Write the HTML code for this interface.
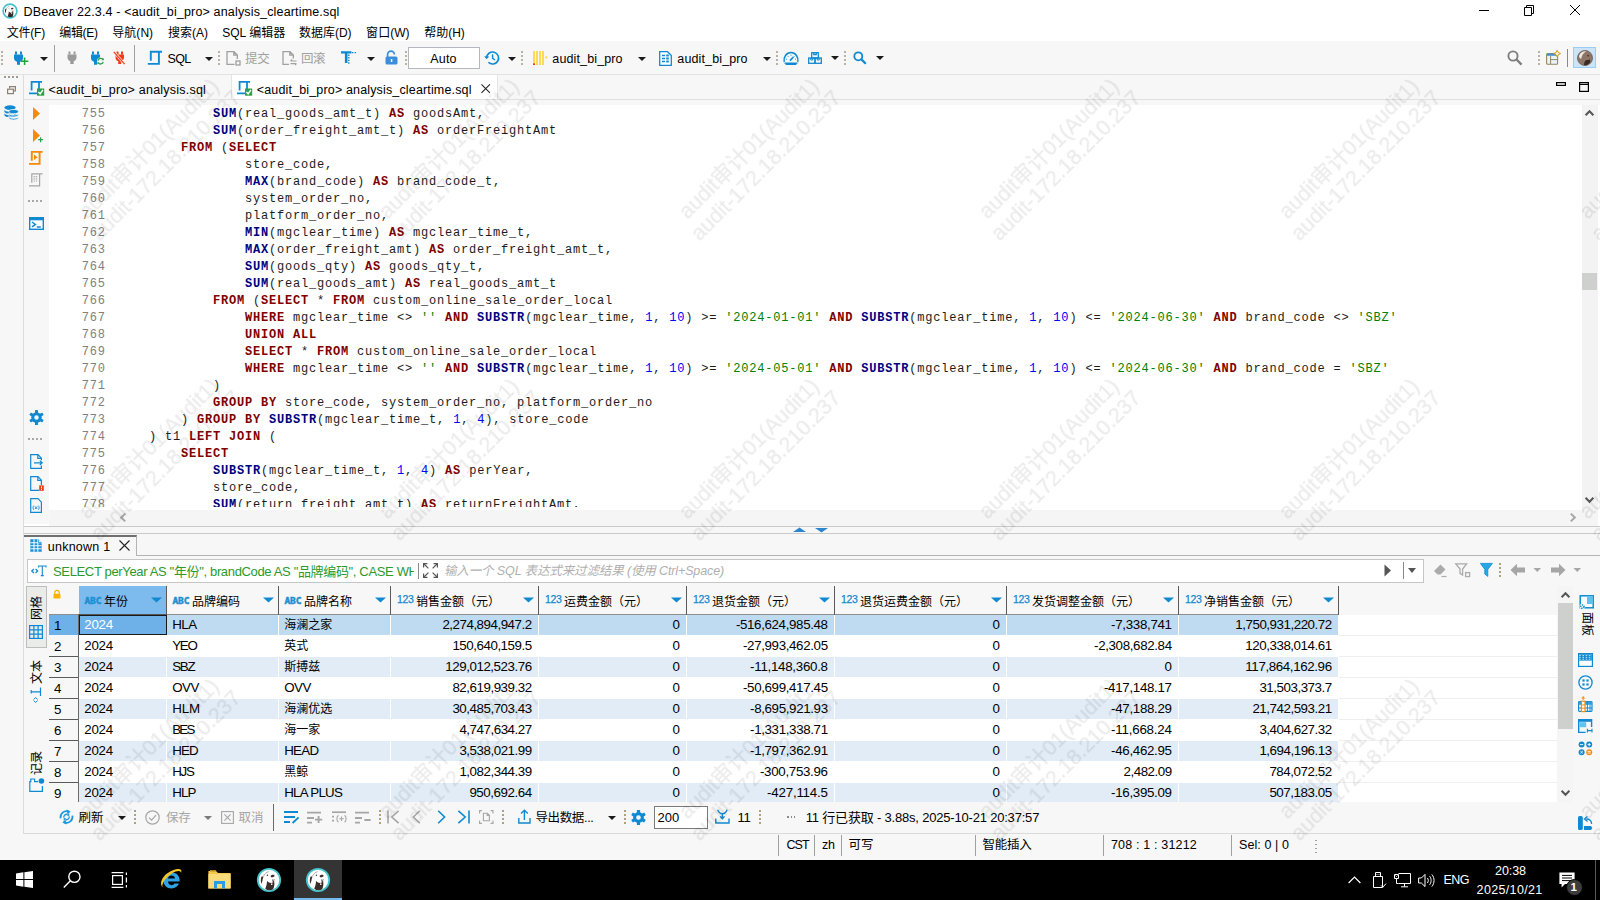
<!DOCTYPE html>
<html lang="zh">
<head>
<meta charset="utf-8">
<title>DBeaver 22.3.4</title>
<style>
html,body{margin:0;padding:0;}
body{width:1600px;height:900px;overflow:hidden;position:relative;background:#fff;font-family:"Liberation Sans","Noto Sans CJK SC",sans-serif;font-size:12.5px;color:#000;}
.abs{position:absolute;}
.t{position:absolute;white-space:pre;line-height:16px;height:16px;}
svg{position:absolute;overflow:visible;}
#titlebar{left:0;top:0;width:1600px;height:24px;background:#fff;}
#menubar{left:0;top:24px;width:1600px;height:17px;background:#fff;}
#toolbar{left:0;top:41px;width:1600px;height:33px;background:#f7f7f7;}
#tabbar{left:0;top:74px;width:1600px;height:31px;background:#f7f7f7;}
#leftstrip{left:0;top:100px;width:24px;height:760px;background:#f7f7f7;}
#editor{left:49px;top:105px;width:1533px;height:405px;background:#fff;}
#gutter{left:24px;top:100px;width:25px;height:424px;background:#f7f7f7;}
.ln{position:absolute;width:55.8px;text-align:right;color:#808080;font-family:"Liberation Mono",monospace;font-size:12px;letter-spacing:0.8px;line-height:17px;white-space:pre;}
.cl{position:absolute;font-family:"Liberation Mono",monospace;font-size:12px;letter-spacing:0.8px;line-height:17px;white-space:pre;color:#1c1c1c;}
.k{color:#800000;font-weight:bold;}
.f{color:#000080;font-weight:bold;}
.n{color:#0000ff;}
.s{color:#008000;}
.dots{position:absolute;width:2px;background:repeating-linear-gradient(to bottom,#b9b1a3 0,#b9b1a3 2px,transparent 2px,transparent 4px);}
.dd{position:absolute;width:0;height:0;margin-left:-0.4px;border-left:4px solid transparent;border-right:4px solid transparent;border-top:4.6px solid #1a1a1a;}
.vsep{position:absolute;width:1px;background:#a0a0a0;}
.hl{position:absolute;height:1px;background:#dedede;}
.vl{position:absolute;width:1px;background:#dedede;}
.wm{position:absolute;width:300px;height:47.6px;line-height:23.8px;font-size:21.33px;text-align:center;white-space:pre;color:#ebebeb;-webkit-text-stroke:0.18px #ebebeb;transform:rotate(-45deg);transform-origin:center;font-family:"Liberation Sans","Noto Sans CJK SC",sans-serif;}
#wm{mix-blend-mode:multiply;}
#taskbar{left:0;top:860px;width:1600px;height:40px;background:#000;}
</style>
</head>
<body>
<div class="abs" id="titlebar"></div>
<div class="abs" id="menubar"></div>
<div class="abs" id="toolbar"></div>
<div class="abs" id="tabbar"></div>
<div class="abs" id="leftstrip"></div>
<div class="abs" id="gutter"></div>
<div class="abs" id="editor"></div>
<!-- title bar -->
<svg style="left:2px;top:3px" width="16" height="16" viewBox="0 0 26 26"><circle cx="13" cy="13" r="11.2" fill="#fff" stroke="#45c2cb" stroke-width="2.6"/><path d="M5.5 9.5 C4.5 12 4.8 15 5.2 17 L6.4 14 C6.6 12 7 10.5 7.6 9.4 Z" fill="#3a2c28"/><path d="M7.6 9 C8.6 7 10.4 5.2 12.6 4.6" fill="none" stroke="#8a8280" stroke-width="0.7"/><ellipse cx="16.6" cy="9" rx="2" ry="1.25" transform="rotate(-15 16.6 9)" fill="#3a2c28"/><circle cx="11.4" cy="8.3" r="0.7" fill="#3a2c28"/><path d="M11 14 C13 16 15.5 16.5 17 15.2 L18.2 14 L18.4 17 C18.2 20 17.6 21.5 16.8 22.6 C14.5 23.6 11.5 23.4 9.2 22 C10.2 19.5 11 17 11 14 Z" fill="#3a2c28"/><path d="M16.4 12.4 l0.8 2.6 l1 -2.8" fill="none" stroke="#3a2c28" stroke-width="0.7"/><rect x="15" y="16.4" width="1.4" height="1.5" fill="#fff"/></svg>
<span class="t" style="letter-spacing:0.164px;left:23.5px;top:4.4px">DBeaver 22.3.4 - &lt;audit_bi_pro&gt; analysis_cleartime.sql</span>
<svg style="left:1479px;top:5px" width="102" height="11" viewBox="0 0 102 11" fill="none" stroke="#000" stroke-width="1"><path d="M0 5.5 H10"/><path d="M45.5 2.5 H52.5 V10.5 H45.5 Z M47.5 2.5 V0.5 H54.5 V8.5 H52.5"/><path d="M91 0 L101 10 M101 0 L91 10"/></svg>
<!-- menu bar -->
<span class="t" style="letter-spacing:-0.226px;left:6.8px;top:25.1px;font-size:12px">文件(F)</span>
<span class="t" style="letter-spacing:-0.300px;left:59.2px;top:25.1px;font-size:12px">编辑(E)</span>
<span class="t" style="letter-spacing:0.066px;left:112.2px;top:25.1px;font-size:12px">导航(N)</span>
<span class="t" style="letter-spacing:0.000px;left:168px;top:25.1px;font-size:12px">搜索(A)</span>
<span class="t" style="letter-spacing:0.013px;left:222.2px;top:25.1px;font-size:12px">SQL 编辑器</span>
<span class="t" style="letter-spacing:-0.029px;left:299.1px;top:25.1px;font-size:12px">数据库(D)</span>
<span class="t" style="letter-spacing:0.034px;left:366.1px;top:25.1px;font-size:12px">窗口(W)</span>
<span class="t" style="letter-spacing:-0.054px;left:424.3px;top:25.1px;font-size:12px">帮助(H)</span>
<!-- toolbar -->
<div class="hl" style="left:0;top:74px;width:1600px;background:#e2e2e2"></div>
<div class="dots" style="left:1px;top:51px;height:14px"></div>
<svg style="left:13px;top:50px" width="16" height="16" viewBox="0 0 16 16"><path d="M3 1.5 v3 M8 1.5 v3" stroke="#0f8ad2" stroke-width="2"/><path d="M1 4.5 h9 v3.5 c0 2 -1.5 3.5 -3 3.8 v3 h-3 v-3 c-1.5 -0.3 -3 -1.8 -3 -3.8 Z" fill="#0f8ad2"/><path d="M11.6 7.6 v7.4 M7.9 11.3 h7.4" stroke="#1fa535" stroke-width="1.5"/></svg>
<div class="dd" style="left:40px;top:57px"></div>
<div class="vsep" style="left:54px;top:45px;height:27px"></div>
<svg style="left:66px;top:51px" width="12" height="14" viewBox="0 0 12 14"><path d="M3.5 0.5 v3 M8.5 0.5 v3" stroke="#9a9a9a" stroke-width="2"/><path d="M1.5 3.5 h9 v3 c0 2 -1.3 3.3 -2.8 3.6 v3 h-3.4 v-3 c-1.5 -0.3 -2.8 -1.6 -2.8 -3.6 Z" fill="#9a9a9a"/></svg>
<svg style="left:90px;top:50px" width="15" height="16" viewBox="0 0 15 16"><path d="M3 1.5 v3 M8 1.5 v3" stroke="#0f8ad2" stroke-width="2"/><path d="M1 4.5 h9 v3.5 c0 2 -1.5 3.5 -3 3.8 v3 h-3 v-3 c-1.5 -0.3 -3 -1.8 -3 -3.8 Z" fill="#0f8ad2"/><circle cx="10.6" cy="11.2" r="3.6" fill="#f7f7f7"/><path d="M8 10.5 a2.8 2.8 0 0 1 5 -1 M13.2 11.8 a2.8 2.8 0 0 1 -5 1" stroke="#2aa24a" stroke-width="1.3" fill="none"/><path d="M13.8 8 v2.2 h-2.2 Z M7.4 14.4 v-2.2 h2.2 Z" fill="#2aa24a"/></svg>
<svg style="left:113px;top:51px" width="13" height="14" viewBox="0 0 13 14"><path d="M4.5 0.5 v3 M9 0.5 v3" stroke="#f03a17" stroke-width="2"/><path d="M2.5 3.5 h8.5 v3 c0 2 -1.3 3.3 -2.8 3.6 v3 h-3 v-3 c-1.5 -0.3 -2.7 -1.6 -2.7 -3.6 Z" fill="#f03a17"/><path d="M0.5 0.5 L12 13.5" stroke="#f7f7f7" stroke-width="2.6"/><path d="M0.8 0.8 L11.6 13.2" stroke="#f03a17" stroke-width="1.2"/></svg>
<div class="vsep" style="left:134px;top:45px;height:27px"></div>
<svg style="left:148px;top:51px" width="15" height="14" viewBox="0 0 15 14" fill="none" stroke="#0f8ad2" stroke-width="1.9"><path d="M2.8 9.8 V0.8 H14 M10.9 1 V12.9 H-0.2"/></svg>
<span class="t" style="letter-spacing:-0.672px;left:167.5px;top:51.3px">SQL</span>
<div class="dd" style="left:205px;top:57px"></div>
<div class="dots" style="left:218px;top:51px;height:14px"></div>
<svg style="left:226px;top:51px" width="15" height="15" viewBox="0 0 15 15" fill="none" stroke="#a0a0a0" stroke-width="1.3"><path d="M8.5 13.3 H1 V0.7 H8 L11.3 4 V8 M7.8 0.8 V4.2 H11.2"/><rect x="10" y="10" width="4" height="4"/></svg>
<span class="t" style="letter-spacing:-0.208px;left:245px;top:51.3px;color:#a0a0a0">提交</span>
<svg style="left:282px;top:51px" width="15" height="15" viewBox="0 0 15 15" fill="none" stroke="#a0a0a0" stroke-width="1.3"><path d="M7 13.3 H1 V0.7 H8 L11.3 4 V7.5 M7.8 0.8 V4.2 H11.2"/><path d="M8.5 10 h6 M8.5 10 l1.6 -1.5 M14.5 12.6 h-6 M14.5 12.6 l-1.6 1.5" stroke-width="1.1"/></svg>
<span class="t" style="letter-spacing:-0.408px;left:301px;top:51.3px;color:#a0a0a0">回滚</span>
<svg style="left:341px;top:51px" width="16" height="14" viewBox="0 0 16 14"><path d="M0 0.2 h10.5 v2.4 h-4 v9.4 h-2.6 v-9.4 h-3.9 Z" fill="#0f8ad2"/><path d="M7.8 3.5 v10.5" stroke="#0f8ad2" stroke-width="1.4" stroke-dasharray="1.4 1.2"/><path d="M11 1.6 h5" stroke="#0f8ad2" stroke-width="1.4" stroke-dasharray="1.4 1.2"/></svg>
<div class="dd" style="left:367px;top:57px"></div>
<svg style="left:385px;top:50px" width="13" height="15" viewBox="0 0 13 15"><path d="M2.6 7 V4.6 a3.4 3.4 0 0 1 6.8 0" fill="none" stroke="#3a8edb" stroke-width="1.7"/><rect x="0.5" y="6.4" width="12" height="8.2" rx="1.6" fill="#3a8edb"/><rect x="5.8" y="9" width="1.5" height="3" fill="#fff"/></svg>
<div class="dots" style="left:405px;top:51px;height:14px"></div>
<div class="abs" style="left:408px;top:47px;width:72px;height:22px;box-sizing:border-box;border:1px solid #b4b8bc;background:#fff"></div>
<span class="t" style="letter-spacing:0.220px;left:430.2px;top:51.4px">Auto</span>
<svg style="left:484px;top:50px" width="16" height="16" viewBox="0 0 16 16" fill="none" stroke="#0f8ad2"><path d="M2.6 8 a6 6 0 1 1 1.8 4.3" stroke-width="1.6"/><path d="M0.2 6.2 l2.4 3 l2.6 -2.8 Z" fill="#0f8ad2" stroke="none"/><path d="M8.6 4.2 V8.3 L11 10" stroke-width="1.4"/></svg>
<div class="dd" style="left:508px;top:56.5px"></div>
<div class="dots" style="left:521px;top:51px;height:14px"></div>
<svg style="left:533px;top:51px" width="15" height="14" viewBox="0 0 15 14"><path d="M1 0 V14 M4 0 V14 M7 0 V14 M10 0 V14" stroke="#ffcf24" stroke-width="1.5"/><rect x="0" y="12.4" width="2" height="1.6" fill="#f03a17"/><rect x="12.4" y="5.5" width="1.8" height="1.8" fill="#ffcf24"/></svg>
<span class="t" style="letter-spacing:0.132px;left:552.3px;top:51.4px">audit_bi_pro</span>
<div class="dd" style="left:638px;top:56.5px"></div>
<svg style="left:659px;top:51px" width="13" height="15" viewBox="0 0 13 15"><path d="M0.7 0.7 H8.5 L12.3 4.5 V14.3 H0.7 Z" fill="#fff" stroke="#0f8ad2" stroke-width="1.3"/><path d="M3 4.5 h3 M3 7.5 h3 M3 10.5 h3" stroke="#0f8ad2" stroke-width="1.3"/><path d="M7.2 4.5 h2.6 M7.2 7.5 h2.6 M7.2 10.5 h2.6" stroke="#0f8ad2" stroke-width="2"/></svg>
<span class="t" style="letter-spacing:0.132px;left:677.3px;top:51.4px">audit_bi_pro</span>
<div class="dd" style="left:763px;top:56.5px"></div>
<div class="dots" style="left:776px;top:51px;height:14px"></div>
<svg style="left:783px;top:52px" width="16" height="13" viewBox="0 0 16 13" fill="none" stroke="#0f8ad2"><path d="M1.2 10 a7 7.6 0 1 1 13.6 0" stroke-width="1.5"/><path d="M1.5 11.2 h13 M2.6 12.4 h10.8" stroke-width="1.2"/><path d="M7 8.6 L10.4 5" stroke-width="1.6"/><path d="M3 7 l1 .4 M4.6 4 l.8 .8 M8 2.6 v1.1 M11.6 4 l-.8 .8 M13 7 l-1 .4" stroke-width="0.9"/></svg>
<svg style="left:808px;top:52px" width="14" height="12" viewBox="0 0 14 12" fill="none" stroke="#0f8ad2" stroke-width="1.3"><rect x="3.7" y="0.7" width="6.6" height="5.3"/><path d="M5.8 0.7 v2 h2.4 v-2"/><rect x="0.7" y="6" width="6.3" height="5.3"/><rect x="7" y="6" width="6.3" height="5.3"/><path d="M2.8 6 v2 h2 v-2 M9.2 6 v2 h2 v-2" stroke-width="1"/></svg>
<div class="dd" style="left:831px;top:56px"></div>
<div class="dots" style="left:844px;top:51px;height:14px"></div>
<svg style="left:853px;top:51px" width="14" height="14" viewBox="0 0 14 14" fill="none" stroke="#0f8ad2"><circle cx="5.3" cy="5.3" r="4" stroke-width="1.8"/><path d="M8.4 8.4 L12.8 12.8" stroke-width="2.2"/></svg>
<div class="dd" style="left:876px;top:56px"></div>
<!-- right toolbar -->
<svg style="left:1507px;top:50px" width="16" height="16" viewBox="0 0 16 16" fill="none" stroke="#7e7e7e"><circle cx="6" cy="6" r="4.6" stroke-width="1.9"/><path d="M9.4 9.4 L14.6 14.6" stroke-width="2.2"/></svg>
<div class="dots" style="left:1538px;top:51px;height:14px"></div>
<svg style="left:1546px;top:50px" width="15" height="15" viewBox="0 0 15 15"><rect x="0.6" y="3.6" width="11" height="10.6" rx="1" fill="#e8f4fb" stroke="#8f8a5a" stroke-width="1.1"/><rect x="1" y="3.6" width="10.2" height="2.2" fill="#4a90d9"/><path d="M4.6 6 v8 M4.6 9.6 h7" stroke="#8f8a5a" stroke-width="1"/><path d="M11.2 0.3 l1.1 2.2 l2.3 1.1 l-2.3 1.1 l-1.1 2.3 l-1.1 -2.3 l-2.3 -1.1 l2.3 -1.1 Z" fill="#fff6d0" stroke="#c79a1a" stroke-width="1"/></svg>
<div class="vsep" style="left:1567px;top:49px;height:18px;background:#8a8a8a"></div>
<div class="abs" style="left:1573px;top:47px;width:23px;height:21px;box-sizing:border-box;border:1px solid #99cdf5;background:#cce4f7"></div>
<svg style="left:1577px;top:50px" width="16" height="16" viewBox="0 0 16 16"><circle cx="8" cy="8" r="7.6" fill="#8c7466"/><path d="M2 6 C3 3 6 1 9 1.4 C6.6 2.6 4.6 5 4.2 9 C3 8.6 2.2 7.4 2 6 Z" fill="#efe9e4"/><path d="M7 15 C7.2 12 8 10.4 9.6 10 C11 9.8 12 10.6 12.6 9 L13.4 11.6 C12.4 13.8 10.4 15.2 8.6 15.4 Z" fill="#3a2a26"/><path d="M9.8 5.2 l2.6 0 l-1.3 1.6 Z" fill="#3a2a26"/><circle cx="8" cy="8" r="7.6" fill="none" stroke="#5e4a40" stroke-width="0.6"/></svg>
<!-- tab bar -->
<div class="abs" style="left:4px;top:76px;width:14px;height:2px;background:repeating-linear-gradient(to right,#a09a90 0,#a09a90 2px,transparent 2px,transparent 4px)"></div>
<svg style="left:7px;top:86px" width="9" height="9" viewBox="0 0 9 9" fill="none" stroke="#8a8074" stroke-width="1.2"><path d="M2.6 2.6 V0.6 H8.4 V5 H6.4"/><rect x="0.6" y="3.2" width="5.8" height="4.4"/></svg>
<div class="vl" style="left:23px;top:75px;height:785px;background:#dcdcdc"></div>
<div class="abs" style="left:231px;top:75px;width:265px;height:24px;background:#fff;border-left:1px solid #e4e4e4;border-right:1px solid #e4e4e4"></div>
<div class="hl" style="left:24px;top:99px;width:1576px;background:#e0e0e0"></div>
<svg style="left:29px;top:81px" width="16" height="15" viewBox="0 0 16 15"><path d="M2.6 9.4 V0.9 H13 M10 1 V12.4 H0" fill="none" stroke="#0f8ad2" stroke-width="1.8"/><rect x="8" y="7.5" width="7.2" height="7.2" fill="#2aa24a"/><path d="M9.4 11 l1.7 1.8 l2.8 -3.8" fill="none" stroke="#fff" stroke-width="1.4"/></svg>
<span class="t" style="letter-spacing:0.222px;left:48.6px;top:81.9px">&lt;audit_bi_pro&gt; analysis.sql</span>
<svg style="left:237px;top:81px" width="16" height="15" viewBox="0 0 16 15"><path d="M2.6 9.4 V0.9 H13 M10 1 V12.4 H0" fill="none" stroke="#0f8ad2" stroke-width="1.8"/><rect x="8" y="7.5" width="7.2" height="7.2" fill="#2aa24a"/><path d="M9.4 11 l1.7 1.8 l2.8 -3.8" fill="none" stroke="#fff" stroke-width="1.4"/></svg>
<span class="t" style="letter-spacing:0.153px;left:256.8px;top:81.9px">&lt;audit_bi_pro&gt; analysis_cleartime.sql</span>
<svg style="left:481px;top:84px" width="9.4" height="9.4" viewBox="0 0 10 10"><path d="M0.5 0.5 L9.5 9.5 M9.5 0.5 L0.5 9.5" stroke="#222" stroke-width="1.1"/></svg>
<svg style="left:1556px;top:82px" width="34" height="10" viewBox="0 0 34 10" fill="none" stroke="#000" stroke-width="1.2"><rect x="0.6" y="0.6" width="8.8" height="2.8"/><rect x="23.6" y="0.6" width="8.8" height="8.8"/><path d="M23.6 2.4 h8.8"/></svg>

<div class="abs" id="codeclip" style="left:24px;top:100px;width:1558px;height:407.4px;overflow:hidden;">
<div class="ln" style="top:5.6px;left:26px">755</div>
<div class="cl" style="top:5.6px;left:189px"><span class="f">SUM</span>(real_goods_amt_t) <span class="k">AS</span> goodsAmt,</div>
<div class="ln" style="top:22.6px;left:26px">756</div>
<div class="cl" style="top:22.6px;left:189px"><span class="f">SUM</span>(order_freight_amt_t) <span class="k">AS</span> orderFreightAmt</div>
<div class="ln" style="top:39.6px;left:26px">757</div>
<div class="cl" style="top:39.6px;left:157px"><span class="k">FROM</span> (<span class="k">SELECT</span></div>
<div class="ln" style="top:56.6px;left:26px">758</div>
<div class="cl" style="top:56.6px;left:221px">store_code,</div>
<div class="ln" style="top:73.6px;left:26px">759</div>
<div class="cl" style="top:73.6px;left:221px"><span class="f">MAX</span>(brand_code) <span class="k">AS</span> brand_code_t,</div>
<div class="ln" style="top:90.6px;left:26px">760</div>
<div class="cl" style="top:90.6px;left:221px">system_order_no,</div>
<div class="ln" style="top:107.6px;left:26px">761</div>
<div class="cl" style="top:107.6px;left:221px">platform_order_no,</div>
<div class="ln" style="top:124.6px;left:26px">762</div>
<div class="cl" style="top:124.6px;left:221px"><span class="f">MIN</span>(mgclear_time) <span class="k">AS</span> mgclear_time_t,</div>
<div class="ln" style="top:141.6px;left:26px">763</div>
<div class="cl" style="top:141.6px;left:221px"><span class="f">MAX</span>(order_freight_amt) <span class="k">AS</span> order_freight_amt_t,</div>
<div class="ln" style="top:158.6px;left:26px">764</div>
<div class="cl" style="top:158.6px;left:221px"><span class="f">SUM</span>(goods_qty) <span class="k">AS</span> goods_qty_t,</div>
<div class="ln" style="top:175.6px;left:26px">765</div>
<div class="cl" style="top:175.6px;left:221px"><span class="f">SUM</span>(real_goods_amt) <span class="k">AS</span> real_goods_amt_t</div>
<div class="ln" style="top:192.6px;left:26px">766</div>
<div class="cl" style="top:192.6px;left:189px"><span class="k">FROM</span> (<span class="k">SELECT</span> * <span class="k">FROM</span> custom_online_sale_order_local</div>
<div class="ln" style="top:209.6px;left:26px">767</div>
<div class="cl" style="top:209.6px;left:221px"><span class="k">WHERE</span> mgclear_time &lt;&gt; <span class="s">''</span> <span class="k">AND</span> <span class="f">SUBSTR</span>(mgclear_time, <span class="n">1</span>, <span class="n">10</span>) &gt;= <span class="s">'2024-01-01'</span> <span class="k">AND</span> <span class="f">SUBSTR</span>(mgclear_time, <span class="n">1</span>, <span class="n">10</span>) &lt;= <span class="s">'2024-06-30'</span> <span class="k">AND</span> brand_code &lt;&gt; <span class="s">'SBZ'</span></div>
<div class="ln" style="top:226.6px;left:26px">768</div>
<div class="cl" style="top:226.6px;left:221px"><span class="k">UNION</span> <span class="k">ALL</span></div>
<div class="ln" style="top:243.6px;left:26px">769</div>
<div class="cl" style="top:243.6px;left:221px"><span class="k">SELECT</span> * <span class="k">FROM</span> custom_online_sale_order_local</div>
<div class="ln" style="top:260.6px;left:26px">770</div>
<div class="cl" style="top:260.6px;left:221px"><span class="k">WHERE</span> mgclear_time &lt;&gt; <span class="s">''</span> <span class="k">AND</span> <span class="f">SUBSTR</span>(mgclear_time, <span class="n">1</span>, <span class="n">10</span>) &gt;= <span class="s">'2024-05-01'</span> <span class="k">AND</span> <span class="f">SUBSTR</span>(mgclear_time, <span class="n">1</span>, <span class="n">10</span>) &lt;= <span class="s">'2024-06-30'</span> <span class="k">AND</span> brand_code = <span class="s">'SBZ'</span></div>
<div class="ln" style="top:277.6px;left:26px">771</div>
<div class="cl" style="top:277.6px;left:189px">)</div>
<div class="ln" style="top:294.6px;left:26px">772</div>
<div class="cl" style="top:294.6px;left:189px"><span class="k">GROUP</span> <span class="k">BY</span> store_code, system_order_no, platform_order_no</div>
<div class="ln" style="top:311.6px;left:26px">773</div>
<div class="cl" style="top:311.6px;left:157px">) <span class="k">GROUP</span> <span class="k">BY</span> <span class="f">SUBSTR</span>(mgclear_time_t, <span class="n">1</span>, <span class="n">4</span>), store_code</div>
<div class="ln" style="top:328.6px;left:26px">774</div>
<div class="cl" style="top:328.6px;left:125px">) t1 <span class="k">LEFT</span> <span class="k">JOIN</span> (</div>
<div class="ln" style="top:345.6px;left:26px">775</div>
<div class="cl" style="top:345.6px;left:157px"><span class="k">SELECT</span></div>
<div class="ln" style="top:362.6px;left:26px">776</div>
<div class="cl" style="top:362.6px;left:189px"><span class="f">SUBSTR</span>(mgclear_time_t, <span class="n">1</span>, <span class="n">4</span>) <span class="k">AS</span> perYear,</div>
<div class="ln" style="top:379.6px;left:26px">777</div>
<div class="cl" style="top:379.6px;left:189px">store_code,</div>
<div class="ln" style="top:396.6px;left:26px">778</div>
<div class="cl" style="top:396.6px;left:189px"><span class="f">SUM</span>(return_freight_amt_t) <span class="k">AS</span> returnFreightAmt,</div>
</div>
<!-- left strip db icon -->
<svg style="left:4px;top:105px" width="15" height="15" viewBox="0 0 15 15"><g fill="#0f8ad2"><ellipse cx="6" cy="2.6" rx="5.6" ry="2.4"/><path d="M0.4 4.4 c0 3 11.2 3 11.2 0 v2 c0 3 -11.2 3 -11.2 0 Z"/><path d="M0.4 8 c0 3 11.2 3 11.2 0 v2 c0 3 -11.2 3 -11.2 0 Z"/></g><g fill="#0f8ad2" stroke="#f7f7f7" stroke-width="0.8"><ellipse cx="9.6" cy="6.6" rx="4.8" ry="2.1"/><path d="M4.8 8.2 c0 2.6 9.6 2.6 9.6 0 v1.8 c0 2.6 -9.6 2.6 -9.6 0 Z"/><path d="M4.8 11.4 c0 2.6 9.6 2.6 9.6 0 v1.6 c0 2.6 -9.6 2.6 -9.6 0 Z"/></g></svg>
<!-- gutter icons -->
<svg style="left:33px;top:107px" width="7" height="13" viewBox="0 0 7 13"><path d="M0 0 L7 6.5 L0 13 Z" fill="#f58a0b"/></svg>
<svg style="left:33px;top:129px" width="11" height="14" viewBox="0 0 11 14"><path d="M0 0 L7 6.5 L0 13 Z" fill="#f58a0b"/><path d="M7.6 8.2 v5 M5.1 10.7 h5" stroke="#2aa24a" stroke-width="1.2"/></svg>
<svg style="left:29px;top:151px" width="14" height="14" viewBox="0 0 14 14" fill="none" stroke="#f58a0b" stroke-width="1.9"><path d="M2.8 9.8 V0.9 H13.6 M10.6 1 V12.9 H0"/><path d="M5 3.4 L8.6 6.2 L5 9 Z" fill="#f58a0b" stroke="none"/></svg>
<svg style="left:29px;top:173px" width="14" height="14" viewBox="0 0 14 14" fill="none" stroke="#a6a6a6" stroke-width="1.2"><path d="M2.8 9.8 V0.9 H13.6 M10.6 1 V12.9 H0"/><path d="M4.6 3.6 h4.4 M4.6 5.8 h4.4 M4.6 8 h4.4" stroke-dasharray="1.2 0.9"/></svg>
<div class="abs" style="left:28px;top:200px;width:14px;height:2px;background:repeating-linear-gradient(to right,#a8a8a8 0,#a8a8a8 2px,transparent 2px,transparent 4px)"></div>
<svg style="left:29px;top:217px" width="15" height="13" viewBox="0 0 15 13"><rect x="0.7" y="0.7" width="13.6" height="11.6" fill="#fff" stroke="#0f8ad2" stroke-width="1.4"/><rect x="0.7" y="0.7" width="13.6" height="2.6" fill="#0f8ad2"/><path d="M3 5 l3.4 2.4 l-3.4 2.4 M7.8 10 h4" fill="none" stroke="#0f8ad2" stroke-width="1.5"/></svg>
<svg style="left:29px;top:410px" width="15" height="15" viewBox="0 0 15 15"><g fill="#0f8ad2"><circle cx="7.5" cy="7.5" r="5.2"/><g id="gt"><rect x="6" y="0" width="3" height="15" rx="0.6"/></g><rect x="6" y="0" width="3" height="15" rx="0.6" transform="rotate(60 7.5 7.5)"/><rect x="6" y="0" width="3" height="15" rx="0.6" transform="rotate(120 7.5 7.5)"/></g><circle cx="7.5" cy="7.5" r="2.2" fill="#f7f7f7"/></svg>
<div class="abs" style="left:28px;top:438px;width:14px;height:2px;background:repeating-linear-gradient(to right,#a8a8a8 0,#a8a8a8 2px,transparent 2px,transparent 4px)"></div>
<svg style="left:30px;top:454px" width="13" height="15" viewBox="0 0 13 15" fill="none" stroke="#0f8ad2" stroke-width="1.2"><path d="M11.4 6.2 V4.2 L8 0.7 H0.7 V14.3 H11.4 V11.4 M7.8 0.8 V4.4 H11.2"/><path d="M4 8.8 h8 M9.8 6.6 l2.4 2.2 l-2.4 2.2"/></svg>
<svg style="left:30px;top:476px" width="14" height="15" viewBox="0 0 14 15"><path d="M9 14.3 H0.7 V0.7 H8 L11.4 4.2 V9 M7.8 0.8 V4.4 H11.2" fill="none" stroke="#0f8ad2" stroke-width="1.2"/><rect x="9.2" y="9.4" width="4.6" height="5.4" fill="#f03a17"/><rect x="11" y="10.4" width="1" height="2" fill="#fff"/><rect x="11" y="13" width="1" height="1" fill="#fff"/></svg>
<svg style="left:30px;top:498px" width="13" height="15" viewBox="0 0 13 15" fill="none" stroke="#0f8ad2" stroke-width="1.2"><path d="M0.7 0.7 H8 L11.4 4.2 V14.3 H0.7 Z"/><path d="M3.8 7.6 c-1 1.4 -1 2.8 0 4.2 M8.4 7.6 c1 1.4 1 2.8 0 4.2 M5 8.4 l2.2 2.6 M7.2 8.4 l-2.2 2.6" stroke-width="0.9"/></svg>
<!-- vertical scrollbar -->
<div class="abs" style="left:1582px;top:105px;width:16px;height:405px;background:#f3f3f3"></div>
<div class="abs" style="left:1582px;top:273px;width:15px;height:17px;background:#cdd0cd"></div>
<svg style="left:1585px;top:110px" width="9" height="6" viewBox="0 0 9 6"><path d="M0.6 5.2 L4.5 1.2 L8.4 5.2" fill="none" stroke="#555" stroke-width="2"/></svg>
<svg style="left:1585px;top:497px" width="9" height="6" viewBox="0 0 9 6"><path d="M0.6 0.8 L4.5 4.8 L8.4 0.8" fill="none" stroke="#555" stroke-width="2"/></svg>
<!-- horizontal scrollbar -->
<div class="abs" style="left:49px;top:510px;width:1549px;height:16px;background:#f5f5f5"></div>
<svg style="left:120px;top:513px" width="6" height="9" viewBox="0 0 6 9"><path d="M5.2 0.6 L1.2 4.5 L5.2 8.4" fill="none" stroke="#a6a6a6" stroke-width="2"/></svg>
<svg style="left:1570px;top:513px" width="6" height="9" viewBox="0 0 6 9"><path d="M0.8 0.6 L4.8 4.5 L0.8 8.4" fill="none" stroke="#a6a6a6" stroke-width="2"/></svg>
<!-- sash -->
<div class="abs" style="left:24px;top:526px;width:1576px;height:34px;background:#f7f7f7"></div>
<div class="hl" style="left:24px;top:526px;width:1576px;background:#cacaca"></div>
<div class="hl" style="left:24px;top:533px;width:1576px;background:#cacaca"></div>
<svg style="left:793px;top:527px" width="36" height="6" viewBox="0 0 36 6"><path d="M0 5 L6.5 0.5 L13 5 Z M22 1 L35 1 L28.5 5.5 Z" fill="#2a86cf"/></svg>

<div class="abs" style="left:24px;top:534px;width:1576px;height:299px;background:#f7f7f7"></div>
<div class="abs" style="left:24px;top:535px;width:113px;height:21px;background:#f7f7f7;box-sizing:border-box;border-top:2px solid #707070;border-right:1px solid #b4b4b4"></div>
<div class="hl" style="left:136px;top:555px;width:1464px;background:#b4b4b4"></div>
<svg style="left:30px;top:539px" width="12" height="13" viewBox="0 0 12 13"><path d="M0.3 0.3 H8.4 L11.7 3.6 V12.7 H0.3 Z" fill="#1a90d8"/><path d="M0.3 3.7 H11.7 M0.3 6.7 H11.7 M0.3 9.7 H11.7 M4 0.3 V12.7 M7.8 0.3 V12.7" stroke="#f7f7f7" stroke-width="1.1" fill="none"/><path d="M8.4 0.3 L11.7 3.6 H8.4 Z" fill="#f7f7f7"/><path d="M8.4 0.6 V3.6 H11.4" stroke="#1a90d8" stroke-width="0.8" fill="none"/></svg>
<span class="t" style="letter-spacing:0.237px;left:47.8px;top:538.6px">unknown 1</span>
<svg style="left:119px;top:540px" width="11" height="11" viewBox="0 0 11 11"><path d="M0.5 0.5 L10.5 10.5 M10.5 0.5 L0.5 10.5" stroke="#222" stroke-width="1.1"/></svg>
<div class="abs" style="left:27px;top:559px;width:1397px;height:24px;box-sizing:border-box;border:1px solid #c6c6c6;background:#fff"></div>
<svg style="left:31px;top:564px" width="16" height="13" viewBox="0 0 16 13" fill="none" stroke="#0f8ad2"><path d="M2.8 5 L0.8 7 L2.8 9 M4.6 5 L6.6 7 L4.6 9" stroke-width="1.3"/><path d="M7.6 3.6 V2 H15 V3.6 M11.3 2 V11.4 M9.8 11.6 H12.8" stroke-width="1.1"/></svg>
<div class="abs" style="left:53px;top:562px;width:361px;height:18px;overflow:hidden"><span class="t" style="letter-spacing:-0.346px;left:0;top:2.4px;color:#2b9a2b;font-size:13px">SELECT perYear AS "年份", brandCode AS "品牌编码", CASE WHEN</span></div>
<div class="vl" style="left:418px;top:563px;height:16px;background:#8a8a8a"></div>
<svg style="left:423px;top:563px" width="15" height="15" viewBox="0 0 15 15" fill="none" stroke="#555" stroke-width="1.2"><path d="M0.6 4.4 V0.6 H4.4 M10.6 0.6 H14.4 V4.4 M14.4 10.6 V14.4 H10.6 M4.4 14.4 H0.6 V10.6"/><path d="M1 1 L5.4 5.4 M14 1 L9.6 5.4 M14 14 L9.6 9.6 M1 14 L5.4 9.6"/></svg>
<span class="t" style="letter-spacing:-0.127px;left:444px;top:562.6px;color:#b0b0b0;font-style:italic">输入一个 SQL 表达式来过滤结果 (使用 Ctrl+Space)</span>
<svg style="left:1384px;top:564px" width="8" height="13" viewBox="0 0 8 13"><path d="M0.5 0.5 L7 6.5 L0.5 12.5 Z" fill="#555"/></svg>
<div class="vl" style="left:1403px;top:562px;height:17px;background:#888"></div>
<div class="dd" style="left:1408px;top:568px;border-top-color:#555;border-left-width:4.5px;border-right-width:4.5px;border-top-width:5px"></div>
<svg style="left:1432px;top:562px" width="16" height="16" viewBox="0 0 16 16"><path d="M2 9 L8.5 2.5 L13.5 7.5 L8.5 12.5 H5.5 Z" fill="#ababab"/><path d="M9.5 14.5 h5" stroke="#ababab" stroke-width="1.2"/></svg>
<svg style="left:1455px;top:563px" width="16" height="15" viewBox="0 0 16 15" fill="none" stroke="#ababab" stroke-width="1.3"><path d="M0.8 0.8 H11.6 L7.6 6 V12 L5 10.4 V6 Z"/><rect x="10.6" y="9.6" width="4" height="4"/></svg>
<svg style="left:1480px;top:563px" width="13" height="14" viewBox="0 0 13 14"><path d="M0.4 0.4 H12.4 L7.8 6.4 V13.4 L4.8 11 V6.4 Z" fill="#28a7e6" stroke="#0f8ad2" stroke-width="0.8"/></svg>
<div class="dots" style="left:1499px;top:563px;height:14px;width:1.5px;background:repeating-linear-gradient(to bottom,#a9a27a 0,#a9a27a 2px,transparent 2px,transparent 4px)"></div>
<svg style="left:1510px;top:563px" width="72" height="14" viewBox="0 0 72 14" fill="#a6a6a6"><path d="M0.5 7 L7 0.8 V4.6 H15 V9.4 H7 V13.2 Z"/><path d="M23.5 5 H31 L27.25 9 Z"/><path d="M55.5 7 L49 0.8 V4.6 H41 V9.4 H49 V13.2 Z"/><path d="M63.5 5 H71 L67.25 9 Z"/></svg>
<div class="abs" style="left:26px;top:586px;width:21px;height:62px;box-sizing:border-box;border:1px solid #bdbdbd;background:#e9ece9"></div>
<span class="t" style="left:24.5px;top:601px;width:24px;height:14px;line-height:14px;font-size:12px;transform:rotate(-90deg);transform-origin:center;text-align:center">网格</span>
<svg style="left:29px;top:625px" width="14" height="14" viewBox="0 0 14 14" fill="none" stroke="#0f8ad2" stroke-width="1.2"><rect x="0.6" y="0.6" width="12.8" height="12.8"/><path d="M0.6 4.9 H13.4 M0.6 9.1 H13.4 M4.9 0.6 V13.4 M9.1 0.6 V13.4"/></svg>
<span class="t" style="left:24.5px;top:664.6px;width:24px;height:14px;line-height:14px;font-size:12px;transform:rotate(-90deg);transform-origin:center;text-align:center">文本</span>
<svg style="left:30px;top:687px" width="12" height="16" viewBox="0 0 12 16" fill="none" stroke="#0f8ad2"><path d="M10.5 0.6 V9 M10.5 4.8 H1 M1.2 3 V6.6" stroke-width="1.2"/><path d="M3.6 12.4 L5.6 10.6 L7.6 12.4 M3.6 13.6 L5.6 15.4 L7.6 13.6" stroke-width="1"/></svg>
<span class="t" style="left:24.5px;top:756px;width:24px;height:14px;line-height:14px;font-size:12px;transform:rotate(-90deg);transform-origin:center;text-align:center">记录</span>
<svg style="left:29px;top:777px" width="16" height="16" viewBox="0 0 16 16" fill="none" stroke="#0f8ad2" stroke-width="1.2"><path d="M9 4.6 H5.6 V2 H1.8 V4.6 H0.8 V14.4 H13.4 V9"/><circle cx="12.4" cy="4" r="2.8" fill="#0f8ad2" stroke="none"/></svg>
<div class="abs" style="left:79px;top:615px;width:1478px;height:188px;background:#fff"></div>
<div class="hl" style="left:1339px;top:635px;width:218px;background:#efefef"></div>
<div class="hl" style="left:1339px;top:656px;width:218px;background:#efefef"></div>
<div class="hl" style="left:1339px;top:677px;width:218px;background:#efefef"></div>
<div class="hl" style="left:1339px;top:698px;width:218px;background:#efefef"></div>
<div class="hl" style="left:1339px;top:719px;width:218px;background:#efefef"></div>
<div class="hl" style="left:1339px;top:740px;width:218px;background:#efefef"></div>
<div class="hl" style="left:1339px;top:761px;width:218px;background:#efefef"></div>
<div class="hl" style="left:1339px;top:782px;width:218px;background:#efefef"></div>
<div class="abs" style="left:49px;top:586px;width:29px;height:217px;background:#f7f7f7"></div>
<svg style="left:53px;top:590px" width="8" height="9" viewBox="0 0 8 9"><path d="M1.8 4.2 V2.6 a2.2 2.2 0 0 1 4.4 0 V4.2" fill="none" stroke="#f5b400" stroke-width="1.2"/><rect x="0.5" y="3.8" width="7" height="4.8" rx="0.8" fill="#f5b400"/></svg>
<div class="abs" style="left:79px;top:586px;width:87px;height:28px;background:#7dbbee"></div>
<div class="hl" style="left:49px;top:614px;width:1290px;background:#8e8e8e"></div>
<div class="hl" style="left:79px;top:614px;width:88px;background:#555"></div>
<div class="vl" style="left:166px;top:586px;height:29px;background:#5a5a5a"></div>
<div class="vl" style="left:278px;top:586px;height:29px;background:#5a5a5a"></div>
<div class="vl" style="left:390px;top:586px;height:29px;background:#5a5a5a"></div>
<div class="vl" style="left:538px;top:586px;height:29px;background:#5a5a5a"></div>
<div class="vl" style="left:686px;top:586px;height:29px;background:#5a5a5a"></div>
<div class="vl" style="left:834px;top:586px;height:29px;background:#5a5a5a"></div>
<div class="vl" style="left:1006px;top:586px;height:29px;background:#5a5a5a"></div>
<div class="vl" style="left:1178px;top:586px;height:29px;background:#5a5a5a"></div>
<div class="vl" style="left:1338px;top:586px;height:29px;background:#5a5a5a"></div>
<span class="t" style="letter-spacing:-0.191px;left:84.6px;top:592.6px;font-size:9.5px;font-weight:bold;color:#1a90d2;-webkit-text-stroke:0.5px #1a90d2;font-family:'DejaVu Sans Mono',monospace">ABC</span>
<span class="t" style="left:104.0px;top:593.8px;font-size:12px">年份</span>
<svg style="left:150.5px;top:597px" width="11" height="6" viewBox="0 0 11 6"><path d="M0 0.4 H11 L5.5 5.6 Z" fill="#0f8ad2"/></svg>
<span class="t" style="letter-spacing:-0.191px;left:172.6px;top:592.6px;font-size:9.5px;font-weight:bold;color:#1a90d2;-webkit-text-stroke:0.5px #1a90d2;font-family:'DejaVu Sans Mono',monospace">ABC</span>
<span class="t" style="left:192.0px;top:593.8px;font-size:12px">品牌编码</span>
<svg style="left:262.5px;top:597px" width="11" height="6" viewBox="0 0 11 6"><path d="M0 0.4 H11 L5.5 5.6 Z" fill="#0f8ad2"/></svg>
<span class="t" style="letter-spacing:-0.191px;left:284.6px;top:592.6px;font-size:9.5px;font-weight:bold;color:#1a90d2;-webkit-text-stroke:0.5px #1a90d2;font-family:'DejaVu Sans Mono',monospace">ABC</span>
<span class="t" style="left:304.0px;top:593.8px;font-size:12px">品牌名称</span>
<svg style="left:374.5px;top:597px" width="11" height="6" viewBox="0 0 11 6"><path d="M0 0.4 H11 L5.5 5.6 Z" fill="#0f8ad2"/></svg>
<span class="t" style="letter-spacing:-0.377px;left:397.0px;top:590.6px;font-size:10.5px;color:#1488d0;-webkit-text-stroke:0.25px #1488d0">123</span>
<span class="t" style="left:416.0px;top:593.8px;font-size:12px">销售金额（元）</span>
<svg style="left:522.5px;top:597px" width="11" height="6" viewBox="0 0 11 6"><path d="M0 0.4 H11 L5.5 5.6 Z" fill="#0f8ad2"/></svg>
<span class="t" style="letter-spacing:-0.377px;left:545.0px;top:590.6px;font-size:10.5px;color:#1488d0;-webkit-text-stroke:0.25px #1488d0">123</span>
<span class="t" style="left:564.0px;top:593.8px;font-size:12px">运费金额（元）</span>
<svg style="left:670.5px;top:597px" width="11" height="6" viewBox="0 0 11 6"><path d="M0 0.4 H11 L5.5 5.6 Z" fill="#0f8ad2"/></svg>
<span class="t" style="letter-spacing:-0.377px;left:693.0px;top:590.6px;font-size:10.5px;color:#1488d0;-webkit-text-stroke:0.25px #1488d0">123</span>
<span class="t" style="left:712.0px;top:593.8px;font-size:12px">退货金额（元）</span>
<svg style="left:818.5px;top:597px" width="11" height="6" viewBox="0 0 11 6"><path d="M0 0.4 H11 L5.5 5.6 Z" fill="#0f8ad2"/></svg>
<span class="t" style="letter-spacing:-0.377px;left:841.0px;top:590.6px;font-size:10.5px;color:#1488d0;-webkit-text-stroke:0.25px #1488d0">123</span>
<span class="t" style="left:860.0px;top:593.8px;font-size:12px">退货运费金额（元）</span>
<svg style="left:990.5px;top:597px" width="11" height="6" viewBox="0 0 11 6"><path d="M0 0.4 H11 L5.5 5.6 Z" fill="#0f8ad2"/></svg>
<span class="t" style="letter-spacing:-0.377px;left:1013.0px;top:590.6px;font-size:10.5px;color:#1488d0;-webkit-text-stroke:0.25px #1488d0">123</span>
<span class="t" style="left:1032.0px;top:593.8px;font-size:12px">发货调整金额（元）</span>
<svg style="left:1162.5px;top:597px" width="11" height="6" viewBox="0 0 11 6"><path d="M0 0.4 H11 L5.5 5.6 Z" fill="#0f8ad2"/></svg>
<span class="t" style="letter-spacing:-0.377px;left:1185.0px;top:590.6px;font-size:10.5px;color:#1488d0;-webkit-text-stroke:0.25px #1488d0">123</span>
<span class="t" style="left:1204.0px;top:593.8px;font-size:12px">净销售金额（元）</span>
<svg style="left:1322.5px;top:597px" width="11" height="6" viewBox="0 0 11 6"><path d="M0 0.4 H11 L5.5 5.6 Z" fill="#0f8ad2"/></svg>
<div class="abs" style="left:49px;top:615px;width:29px;height:20px;background:#6db1e8"></div>
<span class="t" style="letter-spacing:-0.222px;left:54px;top:615.6px;font-size:13.33px;line-height:20px;height:20px">1</span>
<div class="abs" style="left:79px;top:615px;width:88px;height:20px;box-sizing:border-box;border:1px solid #1a1a1a;background:#6db1e8"></div>
<span class="t" style="letter-spacing:-0.214px;left:84.2px;top:614.6px;font-size:13.33px;line-height:20px;height:20px;color:#fff">2024</span>
<div class="abs" style="left:167px;top:615px;width:111px;height:20px;background:#bfdbf1"></div>
<span class="t" style="letter-spacing:-0.546px;left:172.2px;top:614.6px;font-size:13.33px;line-height:20px;height:20px;color:#000">HLA</span>
<div class="abs" style="left:279px;top:615px;width:111px;height:20px;background:#bfdbf1"></div>
<span class="t" style="left:284.2px;top:615.2px;font-size:12px;line-height:20px;height:20px;color:#000">海澜之家</span>
<div class="abs" style="left:391px;top:615px;width:147px;height:20px;background:#bfdbf1"></div>
<span class="t" style="letter-spacing:-0.471px;left:442.4px;top:614.6px;font-size:13.33px;line-height:20px;height:20px;color:#000">2,274,894,947.2</span>
<div class="abs" style="left:539px;top:615px;width:147px;height:20px;background:#bfdbf1"></div>
<span class="t" style="letter-spacing:-0.322px;left:672.6px;top:614.6px;font-size:13.33px;line-height:20px;height:20px;color:#000">0</span>
<div class="abs" style="left:687px;top:615px;width:147px;height:20px;background:#bfdbf1"></div>
<span class="t" style="letter-spacing:-0.353px;left:735.9px;top:614.6px;font-size:13.33px;line-height:20px;height:20px;color:#000">-516,624,985.48</span>
<div class="abs" style="left:835px;top:615px;width:171px;height:20px;background:#bfdbf1"></div>
<span class="t" style="letter-spacing:-0.322px;left:992.6px;top:614.6px;font-size:13.33px;line-height:20px;height:20px;color:#000">0</span>
<div class="abs" style="left:1007px;top:615px;width:171px;height:20px;background:#bfdbf1"></div>
<span class="t" style="letter-spacing:-0.313px;left:1111.1px;top:614.6px;font-size:13.33px;line-height:20px;height:20px;color:#000">-7,338,741</span>
<div class="abs" style="left:1179px;top:615px;width:159px;height:20px;background:#bfdbf1"></div>
<span class="t" style="letter-spacing:-0.460px;left:1235.3px;top:614.6px;font-size:13.33px;line-height:20px;height:20px;color:#000">1,750,931,220.72</span>
<span class="t" style="letter-spacing:-0.222px;left:54px;top:636.6px;font-size:13.33px;line-height:20px;height:20px">2</span>
<div class="hl" style="left:49px;top:656px;width:29px;background:#5a5a5a"></div>
<span class="t" style="letter-spacing:-0.214px;left:84.2px;top:635.6px;font-size:13.33px;line-height:20px;height:20px;color:#000">2024</span>
<span class="t" style="letter-spacing:-1.219px;left:172.2px;top:635.6px;font-size:13.33px;line-height:20px;height:20px;color:#000">YEO</span>
<span class="t" style="left:284.2px;top:636.2px;font-size:12px;line-height:20px;height:20px;color:#000">英式</span>
<span class="t" style="letter-spacing:-0.456px;left:452.4px;top:635.6px;font-size:13.33px;line-height:20px;height:20px;color:#000">150,640,159.5</span>
<span class="t" style="letter-spacing:-0.322px;left:672.6px;top:635.6px;font-size:13.33px;line-height:20px;height:20px;color:#000">0</span>
<span class="t" style="letter-spacing:-0.356px;left:743.0px;top:635.6px;font-size:13.33px;line-height:20px;height:20px;color:#000">-27,993,462.05</span>
<span class="t" style="letter-spacing:-0.322px;left:992.6px;top:635.6px;font-size:13.33px;line-height:20px;height:20px;color:#000">0</span>
<span class="t" style="letter-spacing:-0.359px;left:1094.1px;top:635.6px;font-size:13.33px;line-height:20px;height:20px;color:#000">-2,308,682.84</span>
<span class="t" style="letter-spacing:-0.447px;left:1245.3px;top:635.6px;font-size:13.33px;line-height:20px;height:20px;color:#000">120,338,014.61</span>
<span class="t" style="letter-spacing:-0.222px;left:54px;top:657.6px;font-size:13.33px;line-height:20px;height:20px">3</span>
<div class="hl" style="left:49px;top:677px;width:29px;background:#5a5a5a"></div>
<div class="abs" style="left:79px;top:657px;width:87px;height:20px;background:#e1ecf7"></div>
<span class="t" style="letter-spacing:-0.214px;left:84.2px;top:656.6px;font-size:13.33px;line-height:20px;height:20px;color:#000">2024</span>
<div class="abs" style="left:167px;top:657px;width:111px;height:20px;background:#e1ecf7"></div>
<span class="t" style="letter-spacing:-1.207px;left:172.2px;top:656.6px;font-size:13.33px;line-height:20px;height:20px;color:#000">SBZ</span>
<div class="abs" style="left:279px;top:657px;width:111px;height:20px;background:#e1ecf7"></div>
<span class="t" style="left:284.2px;top:657.2px;font-size:12px;line-height:20px;height:20px;color:#000">斯搏兹</span>
<div class="abs" style="left:391px;top:657px;width:147px;height:20px;background:#e1ecf7"></div>
<span class="t" style="letter-spacing:-0.447px;left:445.3px;top:656.6px;font-size:13.33px;line-height:20px;height:20px;color:#000">129,012,523.76</span>
<div class="abs" style="left:539px;top:657px;width:147px;height:20px;background:#e1ecf7"></div>
<span class="t" style="letter-spacing:-0.322px;left:672.6px;top:656.6px;font-size:13.33px;line-height:20px;height:20px;color:#000">0</span>
<div class="abs" style="left:687px;top:657px;width:147px;height:20px;background:#e1ecf7"></div>
<span class="t" style="letter-spacing:-0.283px;left:750.1px;top:656.6px;font-size:13.33px;line-height:20px;height:20px;color:#000">-11,148,360.8</span>
<div class="abs" style="left:835px;top:657px;width:171px;height:20px;background:#e1ecf7"></div>
<span class="t" style="letter-spacing:-0.322px;left:992.6px;top:656.6px;font-size:13.33px;line-height:20px;height:20px;color:#000">0</span>
<div class="abs" style="left:1007px;top:657px;width:171px;height:20px;background:#e1ecf7"></div>
<span class="t" style="letter-spacing:-0.322px;left:1164.6px;top:656.6px;font-size:13.33px;line-height:20px;height:20px;color:#000">0</span>
<div class="abs" style="left:1179px;top:657px;width:159px;height:20px;background:#e1ecf7"></div>
<span class="t" style="letter-spacing:-0.377px;left:1245.3px;top:656.6px;font-size:13.33px;line-height:20px;height:20px;color:#000">117,864,162.96</span>
<span class="t" style="letter-spacing:-0.222px;left:54px;top:678.6px;font-size:13.33px;line-height:20px;height:20px">4</span>
<div class="hl" style="left:49px;top:698px;width:29px;background:#5a5a5a"></div>
<span class="t" style="letter-spacing:-0.214px;left:84.2px;top:677.6px;font-size:13.33px;line-height:20px;height:20px;color:#000">2024</span>
<span class="t" style="letter-spacing:-0.519px;left:172.2px;top:677.6px;font-size:13.33px;line-height:20px;height:20px;color:#000">OVV</span>
<span class="t" style="letter-spacing:-0.519px;left:284.2px;top:677.6px;font-size:13.33px;line-height:20px;height:20px;color:#000">OVV</span>
<span class="t" style="letter-spacing:-0.456px;left:452.4px;top:677.6px;font-size:13.33px;line-height:20px;height:20px;color:#000">82,619,939.32</span>
<span class="t" style="letter-spacing:-0.322px;left:672.6px;top:677.6px;font-size:13.33px;line-height:20px;height:20px;color:#000">0</span>
<span class="t" style="letter-spacing:-0.356px;left:743.0px;top:677.6px;font-size:13.33px;line-height:20px;height:20px;color:#000">-50,699,417.45</span>
<span class="t" style="letter-spacing:-0.322px;left:992.6px;top:677.6px;font-size:13.33px;line-height:20px;height:20px;color:#000">0</span>
<span class="t" style="letter-spacing:-0.314px;left:1104.0px;top:677.6px;font-size:13.33px;line-height:20px;height:20px;color:#000">-417,148.17</span>
<span class="t" style="letter-spacing:-0.461px;left:1259.4px;top:677.6px;font-size:13.33px;line-height:20px;height:20px;color:#000">31,503,373.7</span>
<span class="t" style="letter-spacing:-0.222px;left:54px;top:699.6px;font-size:13.33px;line-height:20px;height:20px">5</span>
<div class="hl" style="left:49px;top:719px;width:29px;background:#5a5a5a"></div>
<div class="abs" style="left:79px;top:699px;width:87px;height:20px;background:#e1ecf7"></div>
<span class="t" style="letter-spacing:-0.214px;left:84.2px;top:698.6px;font-size:13.33px;line-height:20px;height:20px;color:#000">2024</span>
<div class="abs" style="left:167px;top:699px;width:111px;height:20px;background:#e1ecf7"></div>
<span class="t" style="letter-spacing:-0.147px;left:172.2px;top:698.6px;font-size:13.33px;line-height:20px;height:20px;color:#000">HLM</span>
<div class="abs" style="left:279px;top:699px;width:111px;height:20px;background:#e1ecf7"></div>
<span class="t" style="left:284.2px;top:699.2px;font-size:12px;line-height:20px;height:20px;color:#000">海澜优选</span>
<div class="abs" style="left:391px;top:699px;width:147px;height:20px;background:#e1ecf7"></div>
<span class="t" style="letter-spacing:-0.456px;left:452.4px;top:698.6px;font-size:13.33px;line-height:20px;height:20px;color:#000">30,485,703.43</span>
<div class="abs" style="left:539px;top:699px;width:147px;height:20px;background:#e1ecf7"></div>
<span class="t" style="letter-spacing:-0.322px;left:672.6px;top:698.6px;font-size:13.33px;line-height:20px;height:20px;color:#000">0</span>
<div class="abs" style="left:687px;top:699px;width:147px;height:20px;background:#e1ecf7"></div>
<span class="t" style="letter-spacing:-0.359px;left:750.1px;top:698.6px;font-size:13.33px;line-height:20px;height:20px;color:#000">-8,695,921.93</span>
<div class="abs" style="left:835px;top:699px;width:171px;height:20px;background:#e1ecf7"></div>
<span class="t" style="letter-spacing:-0.322px;left:992.6px;top:698.6px;font-size:13.33px;line-height:20px;height:20px;color:#000">0</span>
<div class="abs" style="left:1007px;top:699px;width:171px;height:20px;background:#e1ecf7"></div>
<span class="t" style="letter-spacing:-0.313px;left:1111.1px;top:698.6px;font-size:13.33px;line-height:20px;height:20px;color:#000">-47,188.29</span>
<div class="abs" style="left:1179px;top:699px;width:159px;height:20px;background:#e1ecf7"></div>
<span class="t" style="letter-spacing:-0.456px;left:1252.4px;top:698.6px;font-size:13.33px;line-height:20px;height:20px;color:#000">21,742,593.21</span>
<span class="t" style="letter-spacing:-0.222px;left:54px;top:720.6px;font-size:13.33px;line-height:20px;height:20px">6</span>
<div class="hl" style="left:49px;top:740px;width:29px;background:#5a5a5a"></div>
<span class="t" style="letter-spacing:-0.214px;left:84.2px;top:719.6px;font-size:13.33px;line-height:20px;height:20px;color:#000">2024</span>
<span class="t" style="letter-spacing:-1.724px;left:172.2px;top:719.6px;font-size:13.33px;line-height:20px;height:20px;color:#000">BES</span>
<span class="t" style="left:284.2px;top:720.2px;font-size:12px;line-height:20px;height:20px;color:#000">海一家</span>
<span class="t" style="letter-spacing:-0.461px;left:459.4px;top:719.6px;font-size:13.33px;line-height:20px;height:20px;color:#000">4,747,634.27</span>
<span class="t" style="letter-spacing:-0.322px;left:672.6px;top:719.6px;font-size:13.33px;line-height:20px;height:20px;color:#000">0</span>
<span class="t" style="letter-spacing:-0.359px;left:750.1px;top:719.6px;font-size:13.33px;line-height:20px;height:20px;color:#000">-1,331,338.71</span>
<span class="t" style="letter-spacing:-0.322px;left:992.6px;top:719.6px;font-size:13.33px;line-height:20px;height:20px;color:#000">0</span>
<span class="t" style="letter-spacing:-0.215px;left:1111.1px;top:719.6px;font-size:13.33px;line-height:20px;height:20px;color:#000">-11,668.24</span>
<span class="t" style="letter-spacing:-0.461px;left:1259.4px;top:719.6px;font-size:13.33px;line-height:20px;height:20px;color:#000">3,404,627.32</span>
<span class="t" style="letter-spacing:-0.222px;left:54px;top:741.6px;font-size:13.33px;line-height:20px;height:20px">7</span>
<div class="hl" style="left:49px;top:761px;width:29px;background:#5a5a5a"></div>
<div class="abs" style="left:79px;top:741px;width:87px;height:20px;background:#e1ecf7"></div>
<span class="t" style="letter-spacing:-0.214px;left:84.2px;top:740.6px;font-size:13.33px;line-height:20px;height:20px;color:#000">2024</span>
<div class="abs" style="left:167px;top:741px;width:111px;height:20px;background:#e1ecf7"></div>
<span class="t" style="letter-spacing:-0.847px;left:172.2px;top:740.6px;font-size:13.33px;line-height:20px;height:20px;color:#000">HED</span>
<div class="abs" style="left:279px;top:741px;width:111px;height:20px;background:#e1ecf7"></div>
<span class="t" style="letter-spacing:-0.708px;left:284.2px;top:740.6px;font-size:13.33px;line-height:20px;height:20px;color:#000">HEAD</span>
<div class="abs" style="left:391px;top:741px;width:147px;height:20px;background:#e1ecf7"></div>
<span class="t" style="letter-spacing:-0.461px;left:459.4px;top:740.6px;font-size:13.33px;line-height:20px;height:20px;color:#000">3,538,021.99</span>
<div class="abs" style="left:539px;top:741px;width:147px;height:20px;background:#e1ecf7"></div>
<span class="t" style="letter-spacing:-0.322px;left:672.6px;top:740.6px;font-size:13.33px;line-height:20px;height:20px;color:#000">0</span>
<div class="abs" style="left:687px;top:741px;width:147px;height:20px;background:#e1ecf7"></div>
<span class="t" style="letter-spacing:-0.359px;left:750.1px;top:740.6px;font-size:13.33px;line-height:20px;height:20px;color:#000">-1,797,362.91</span>
<div class="abs" style="left:835px;top:741px;width:171px;height:20px;background:#e1ecf7"></div>
<span class="t" style="letter-spacing:-0.322px;left:992.6px;top:740.6px;font-size:13.33px;line-height:20px;height:20px;color:#000">0</span>
<div class="abs" style="left:1007px;top:741px;width:171px;height:20px;background:#e1ecf7"></div>
<span class="t" style="letter-spacing:-0.313px;left:1111.1px;top:740.6px;font-size:13.33px;line-height:20px;height:20px;color:#000">-46,462.95</span>
<div class="abs" style="left:1179px;top:741px;width:159px;height:20px;background:#e1ecf7"></div>
<span class="t" style="letter-spacing:-0.461px;left:1259.4px;top:740.6px;font-size:13.33px;line-height:20px;height:20px;color:#000">1,694,196.13</span>
<span class="t" style="letter-spacing:-0.222px;left:54px;top:762.6px;font-size:13.33px;line-height:20px;height:20px">8</span>
<div class="hl" style="left:49px;top:782px;width:29px;background:#5a5a5a"></div>
<span class="t" style="letter-spacing:-0.214px;left:84.2px;top:761.6px;font-size:13.33px;line-height:20px;height:20px;color:#000">2024</span>
<span class="t" style="letter-spacing:-1.296px;left:172.2px;top:761.6px;font-size:13.33px;line-height:20px;height:20px;color:#000">HJS</span>
<span class="t" style="left:284.2px;top:762.2px;font-size:12px;line-height:20px;height:20px;color:#000">黑鲸</span>
<span class="t" style="letter-spacing:-0.461px;left:459.4px;top:761.6px;font-size:13.33px;line-height:20px;height:20px;color:#000">1,082,344.39</span>
<span class="t" style="letter-spacing:-0.322px;left:672.6px;top:761.6px;font-size:13.33px;line-height:20px;height:20px;color:#000">0</span>
<span class="t" style="letter-spacing:-0.314px;left:760.0px;top:761.6px;font-size:13.33px;line-height:20px;height:20px;color:#000">-300,753.96</span>
<span class="t" style="letter-spacing:-0.322px;left:992.6px;top:761.6px;font-size:13.33px;line-height:20px;height:20px;color:#000">0</span>
<span class="t" style="letter-spacing:-0.461px;left:1123.5px;top:761.6px;font-size:13.33px;line-height:20px;height:20px;color:#000">2,482.09</span>
<span class="t" style="letter-spacing:-0.442px;left:1269.4px;top:761.6px;font-size:13.33px;line-height:20px;height:20px;color:#000">784,072.52</span>
<span class="t" style="letter-spacing:-0.222px;left:54px;top:783.6px;font-size:13.33px;line-height:20px;height:20px">9</span>
<div class="hl" style="left:49px;top:803px;width:29px;background:#5a5a5a"></div>
<div class="abs" style="left:79px;top:783px;width:87px;height:20px;background:#e1ecf7"></div>
<span class="t" style="letter-spacing:-0.214px;left:84.2px;top:782.6px;font-size:13.33px;line-height:20px;height:20px;color:#000">2024</span>
<div class="abs" style="left:167px;top:783px;width:111px;height:20px;background:#e1ecf7"></div>
<span class="t" style="letter-spacing:-0.913px;left:172.2px;top:782.6px;font-size:13.33px;line-height:20px;height:20px;color:#000">HLP</span>
<div class="abs" style="left:279px;top:783px;width:111px;height:20px;background:#e1ecf7"></div>
<span class="t" style="letter-spacing:-0.715px;left:284.2px;top:782.6px;font-size:13.33px;line-height:20px;height:20px;color:#000">HLA PLUS</span>
<div class="abs" style="left:391px;top:783px;width:147px;height:20px;background:#e1ecf7"></div>
<span class="t" style="letter-spacing:-0.442px;left:469.4px;top:782.6px;font-size:13.33px;line-height:20px;height:20px;color:#000">950,692.64</span>
<div class="abs" style="left:539px;top:783px;width:147px;height:20px;background:#e1ecf7"></div>
<span class="t" style="letter-spacing:-0.322px;left:672.6px;top:782.6px;font-size:13.33px;line-height:20px;height:20px;color:#000">0</span>
<div class="abs" style="left:687px;top:783px;width:147px;height:20px;background:#e1ecf7"></div>
<span class="t" style="letter-spacing:-0.215px;left:767.1px;top:782.6px;font-size:13.33px;line-height:20px;height:20px;color:#000">-427,114.5</span>
<div class="abs" style="left:835px;top:783px;width:171px;height:20px;background:#e1ecf7"></div>
<span class="t" style="letter-spacing:-0.322px;left:992.6px;top:782.6px;font-size:13.33px;line-height:20px;height:20px;color:#000">0</span>
<div class="abs" style="left:1007px;top:783px;width:171px;height:20px;background:#e1ecf7"></div>
<span class="t" style="letter-spacing:-0.313px;left:1111.1px;top:782.6px;font-size:13.33px;line-height:20px;height:20px;color:#000">-16,395.09</span>
<div class="abs" style="left:1179px;top:783px;width:159px;height:20px;background:#e1ecf7"></div>
<span class="t" style="letter-spacing:-0.442px;left:1269.4px;top:782.6px;font-size:13.33px;line-height:20px;height:20px;color:#000">507,183.05</span>
<div class="vl" style="left:78px;top:614px;height:189px;background:#6a6a6a"></div>
<div class="abs" style="left:1557px;top:586px;width:16px;height:217px;background:#f5f5f5"></div>
<div class="abs" style="left:1558px;top:603px;width:15px;height:126px;background:#cdd0cd"></div>
<svg style="left:1561px;top:592px" width="9" height="6" viewBox="0 0 9 6"><path d="M0.6 5.2 L4.5 1.2 L8.4 5.2" fill="none" stroke="#555" stroke-width="2"/></svg>
<svg style="left:1561px;top:790px" width="9" height="6" viewBox="0 0 9 6"><path d="M0.6 0.8 L4.5 4.8 L8.4 0.8" fill="none" stroke="#555" stroke-width="2"/></svg>
<div class="abs" style="left:49px;top:802px;width:1508px;height:2px;background:#f7f7f7"></div>
<!-- right panel icons -->
<svg style="left:1579px;top:595px" width="15" height="15" viewBox="0 0 15 15"><rect x="1.2" y="0.8" width="13" height="12" fill="#fff" stroke="#0f8ad2" stroke-width="1.5"/><rect x="8" y="1.4" width="6" height="7.6" fill="#5bc4ee"/><circle cx="3.4" cy="11.6" r="2.8" fill="#f7f7f7"/><circle cx="3.4" cy="11.6" r="1.6" fill="none" stroke="#0f8ad2" stroke-width="1.6" stroke-dasharray="1.2 0.9"/></svg>
<span class="t" style="left:1573.5px;top:617px;width:26px;height:14px;line-height:14px;font-size:12px;transform:rotate(90deg);transform-origin:center;text-align:center">面板</span>
<svg style="left:1578px;top:653px" width="15" height="14" viewBox="0 0 15 14"><rect x="0.6" y="0.6" width="13.8" height="12.8" fill="#fff" stroke="#0f8ad2" stroke-width="1.2"/><rect x="1.2" y="1.2" width="12.6" height="6.4" fill="#0f8ad2"/><path d="M1.2 2.6 h12.6 M1.2 4.4 h12.6 M1.2 6.2 h12.6" stroke="#cfe9f8" stroke-width="0.9" stroke-dasharray="1.6 1.6"/></svg>
<svg style="left:1578px;top:675px" width="15" height="15" viewBox="0 0 15 15"><circle cx="7.5" cy="7.5" r="6.6" fill="none" stroke="#0f8ad2" stroke-width="1.3"/><g fill="#0f8ad2"><rect x="4.4" y="4.4" width="2.2" height="2.2"/><rect x="8.4" y="4.4" width="2.2" height="2.2"/><rect x="4.4" y="8.4" width="2.2" height="2.2"/><rect x="8.4" y="8.4" width="2.2" height="2.2"/></g></svg>
<svg style="left:1578px;top:696px" width="15" height="16" viewBox="0 0 15 16"><rect x="0.6" y="5.6" width="13.4" height="9.8" rx="0.8" fill="#fff" stroke="#0f8ad2" stroke-width="1.2"/><rect x="0.6" y="5.6" width="13.4" height="3.2" fill="#2d9fe0"/><path d="M0.6 12 h13.4 M9.4 5.6 v9.8 M12 8.8 v6.6" stroke="#0f8ad2" stroke-width="1"/><rect x="3.4" y="5.2" width="3.6" height="10.4" fill="#fff" stroke="#f58a0b" stroke-width="1.2"/><path d="M3.4 9 h3.6 M3.4 12.2 h3.6" stroke="#f58a0b" stroke-width="1"/><path d="M5.2 0.2 V3.8 M3.6 2 h3.2" stroke="#f58a0b" stroke-width="1.2"/></svg>
<svg style="left:1578px;top:719px" width="15" height="15" viewBox="0 0 15 15"><path d="M7.6 13.4 H0.7 V0.8 H13.6 V8" fill="none" stroke="#0f8ad2" stroke-width="1.4"/><rect x="0.7" y="0.4" width="12.9" height="2.4" fill="#0f8ad2"/><rect x="1.6" y="3.2" width="6.6" height="5" fill="#5cc4ee"/><path d="M9.4 11.6 h4.6 M9.4 9.8 v3.6 M14 9.8 v3.6" stroke="#0f8ad2" stroke-width="1.1" fill="none"/></svg>
<svg style="left:1578px;top:741px" width="15" height="15" viewBox="0 0 15 15"><circle cx="3.6" cy="3.6" r="3" fill="#0f8ad2"/><circle cx="11.2" cy="3.6" r="3" fill="#0f8ad2"/><circle cx="3.6" cy="11.2" r="3" fill="#0f8ad2"/><circle cx="11.2" cy="11.2" r="3" fill="#f58a0b"/><path d="M2 3.6 h3.2 M9.6 3.6 h3.2 M11.2 2 v3.2 M2.4 10 l2.4 2.4 M4.8 10 l-2.4 2.4 M9.6 10.4 h3.2 M9.6 12 h3.2" stroke="#fff" stroke-width="0.9"/></svg>
<svg style="left:1578px;top:816px" width="15" height="14" viewBox="0 0 15 14"><rect x="0" y="0" width="4.8" height="14" rx="1.6" fill="#0f8ad2"/><path d="M6 10 h7 l1.4 2 l-1.4 2 h-7 Z" fill="#0f8ad2"/><path d="M13.6 8 c0 -3.4 -2 -5 -5.4 -5" fill="none" stroke="#0f8ad2" stroke-width="1.3"/><path d="M9.4 0.4 L6.4 3 L9.6 5.6" fill="none" stroke="#0f8ad2" stroke-width="1.3"/></svg>
<!-- bottom toolbar -->
<svg style="left:59px;top:809px" width="15" height="16" viewBox="0 0 15 16" fill="none" stroke="#1e98dc" stroke-width="1.7"><path d="M1.6 9.4 A6 6 0 0 1 9.6 2.6"/><path d="M13.4 6.6 A6 6 0 0 1 5.4 13.4"/><path d="M7.6 0.4 L11.6 2.6 L8.6 5.6 Z M7.4 15.6 L3.4 13.4 L6.4 10.4 Z" fill="#1e98dc" stroke="none"/><path d="M4.8 8.6 A2.9 2.9 0 0 1 8.6 5.4 M10.2 7.4 A2.9 2.9 0 0 1 6.4 10.6" stroke-width="1.3"/><path d="M10.6 4.6 L10 7.2 L7.6 6.2 Z M4.4 11.4 L5 8.8 L7.4 9.8 Z" fill="#1e98dc" stroke="none"/></svg>
<span class="t" style="letter-spacing:-0.108px;left:78.6px;top:809.8px">刷新</span>
<div class="dd" style="left:118px;top:816px"></div>
<div class="dots" style="left:134px;top:810px;height:14px;width:1.5px;background:repeating-linear-gradient(to bottom,#a9a27a 0,#a9a27a 2px,transparent 2px,transparent 4px)"></div>
<svg style="left:145px;top:810px" width="15" height="15" viewBox="0 0 15 15" fill="none" stroke="#a6a6a6" stroke-width="1.2"><circle cx="7.5" cy="7.5" r="6.7"/><path d="M4 7.6 L6.6 10.2 L11 5.2"/></svg>
<span class="t" style="letter-spacing:-0.308px;left:166px;top:809.8px;color:#a6a6a6">保存</span>
<div class="dd" style="left:204px;top:816px;border-top-color:#7a7a7a"></div>
<svg style="left:221px;top:811px" width="13" height="13" viewBox="0 0 13 13" fill="none" stroke="#a6a6a6" stroke-width="1.1"><rect x="0.6" y="0.6" width="11.8" height="11.8"/><path d="M3.4 3.4 L9.6 9.6 M9.6 3.4 L3.4 9.6"/></svg>
<span class="t" style="letter-spacing:-0.208px;left:238.6px;top:809.8px;color:#a6a6a6">取消</span>
<div class="vsep" style="left:273px;top:804px;height:27px;background:#6a6a6a"></div>
<svg style="left:284px;top:811px" width="16" height="13" viewBox="0 0 16 13" fill="none" stroke="#0f8ad2" stroke-width="1.9"><path d="M0 1 H14 M0 6 H11 M0 11 H6"/><path d="M8.6 12 L14.6 6.4" stroke-width="1.8"/></svg>
<svg style="left:307px;top:811px" width="16" height="13" viewBox="0 0 16 13" fill="none" stroke="#a6a6a6" stroke-width="1.9"><path d="M0 1.6 H14 M0 7 H7 M0 11.6 H5"/><path d="M11.6 5 v7 M8 8.6 h7.2"/></svg>
<svg style="left:332px;top:811px" width="15" height="13" viewBox="0 0 15 13" fill="none" stroke="#a6a6a6" stroke-width="1.7"><path d="M0 1.2 H14"/><path d="M0 5.6 H2 M0 9.6 H2" /><path d="M6.4 4.2 c-2 1.6 -2 5.4 0 7 M12.6 4.2 c2 1.6 2 5.4 0 7 M7.2 7.8 h4.6 M9.5 5.6 v4.4" stroke-width="1.1"/></svg>
<svg style="left:355px;top:811px" width="16" height="13" viewBox="0 0 16 13" fill="none" stroke="#a6a6a6" stroke-width="1.9"><path d="M0 1.6 H14 M0 7 H7 M0 11.6 H5 M9.4 9 H15.6"/></svg>
<div class="dots" style="left:379px;top:810px;height:14px;width:1.5px;background:repeating-linear-gradient(to bottom,#a9a27a 0,#a9a27a 2px,transparent 2px,transparent 4px)"></div>
<svg style="left:387px;top:810px" width="13" height="14" viewBox="0 0 13 14" fill="none" stroke="#a6a6a6" stroke-width="1.6"><path d="M1 0.4 V13.6 M11.6 0.8 L4.8 7 L11.6 13.2"/></svg>
<svg style="left:412px;top:810px" width="9" height="14" viewBox="0 0 9 14" fill="none" stroke="#a6a6a6" stroke-width="1.6"><path d="M7.8 0.8 L1.4 7 L7.8 13.2"/></svg>
<svg style="left:437px;top:810px" width="9" height="14" viewBox="0 0 9 14" fill="none" stroke="#0f8ad2" stroke-width="1.6"><path d="M1.2 0.8 L7.6 7 L1.2 13.2"/></svg>
<svg style="left:457px;top:810px" width="13" height="14" viewBox="0 0 13 14" fill="none" stroke="#0f8ad2" stroke-width="1.6"><path d="M12 0.4 V13.6 M1.4 0.8 L8.2 7 L1.4 13.2"/></svg>
<svg style="left:479px;top:810px" width="15" height="14" viewBox="0 0 15 14" fill="none" stroke="#a6a6a6" stroke-width="1.1"><path d="M3 0.6 H0.6 V3.4 M0.6 10.6 V13.4 H3 M11.6 0.6 H14 V3.4 M14 10.6 V13.4 H11.6"/><path d="M4.4 3.2 H8.4 L10.4 5.2 V10.8 H4.4 Z M8.2 3.4 V5.4 H10.2"/></svg>
<div class="dots" style="left:502px;top:810px;height:14px;width:1.5px;background:repeating-linear-gradient(to bottom,#a9a27a 0,#a9a27a 2px,transparent 2px,transparent 4px)"></div>
<svg style="left:518px;top:809px" width="13" height="15" viewBox="0 0 13 15" fill="none" stroke="#0f8ad2" stroke-width="1.4"><path d="M0.8 9 V14 H12 V9 M6.4 11 V1.4 M3 4.6 L6.4 1.2 L9.8 4.6"/></svg>
<span class="t" style="letter-spacing:-0.346px;left:535.4px;top:809.8px">导出数据...</span>
<div class="dd" style="left:608px;top:816px"></div>
<div class="dots" style="left:624px;top:810px;height:14px;width:1.5px;background:repeating-linear-gradient(to bottom,#a9a27a 0,#a9a27a 2px,transparent 2px,transparent 4px)"></div>
<svg style="left:631px;top:809.5px" width="15" height="15" viewBox="0 0 15 15"><g fill="#0f8ad2"><circle cx="7.5" cy="7.5" r="5.4"/><rect x="5.9" y="0" width="3.2" height="15" rx="0.6"/><rect x="5.9" y="0" width="3.2" height="15" rx="0.6" transform="rotate(60 7.5 7.5)"/><rect x="5.9" y="0" width="3.2" height="15" rx="0.6" transform="rotate(120 7.5 7.5)"/></g><circle cx="7.5" cy="7.5" r="2.3" fill="#f7f7f7"/></svg>
<div class="abs" style="left:654px;top:806px;width:54px;height:23px;box-sizing:border-box;border:1px solid #7a7a7a;background:#fff"></div>
<span class="t" style="letter-spacing:0.032px;left:657.6px;top:810px;font-size:13px">200</span>
<svg style="left:715px;top:809px" width="15" height="15" viewBox="0 0 15 15" fill="none" stroke="#0f8ad2" stroke-width="1.4"><path d="M0.8 9.4 V14 H14 V9.4 M7.4 9.6 V4.6 M2.6 0.8 C4 4 5.6 4.8 7.4 4.8 C9.2 4.8 10.8 4 12.2 0.8 M5.2 7.4 L7.4 9.8 L9.6 7.4"/></svg>
<span class="t" style="letter-spacing:-0.250px;left:737.6px;top:809.8px;font-size:13px">11</span>
<div class="dots" style="left:759px;top:810px;height:14px;width:1.5px;background:repeating-linear-gradient(to bottom,#a9a27a 0,#a9a27a 2px,transparent 2px,transparent 4px)"></div>
<div class="abs" style="left:787px;top:816px;width:9px;height:1.5px;background:repeating-linear-gradient(to right,#8a8a8a 0,#8a8a8a 1.5px,transparent 1.5px,transparent 3.5px)"></div>
<span class="t" style="letter-spacing:-0.195px;left:805.8px;top:809.8px;font-size:13px">11 行已获取 - 3.88s, 2025-10-21 20:37:57</span>
<!-- bottom lines -->
<div class="hl" style="left:24px;top:833px;width:1576px;background:#dadada"></div>
<!-- status bar -->
<div class="abs" style="left:0;top:834px;width:1600px;height:26px;background:#f7f7f7"></div>
<div class="vl" style="left:778px;top:835px;height:21px;background:#a0a0a0"></div>
<span class="t" style="letter-spacing:-1.000px;left:786.6px;top:836.6px">CST</span>
<div class="vl" style="left:814px;top:835px;height:21px;background:#a0a0a0"></div>
<span class="t" style="letter-spacing:-0.302px;left:822px;top:836.6px">zh</span>
<div class="vl" style="left:841px;top:835px;height:21px;background:#a0a0a0"></div>
<span class="t" style="letter-spacing:-0.208px;left:848.6px;top:836.6px">可写</span>
<div class="vl" style="left:975px;top:835px;height:21px;background:#a0a0a0"></div>
<span class="t" style="letter-spacing:-0.254px;left:982.6px;top:836.6px">智能插入</span>
<div class="vl" style="left:1103px;top:835px;height:21px;background:#a0a0a0"></div>
<span class="t" style="letter-spacing:0.173px;left:1111px;top:836.6px">708 : 1 : 31212</span>
<div class="vl" style="left:1231px;top:835px;height:21px;background:#a0a0a0"></div>
<span class="t" style="letter-spacing:0.089px;left:1239px;top:836.6px">Sel: 0 | 0</span>
<div class="dots" style="left:1315px;top:840px;height:14px;width:1.5px;background:repeating-linear-gradient(to bottom,#a0a0a0 0,#a0a0a0 1.5px,transparent 1.5px,transparent 4px)"></div>

<div class="abs" id="taskbar"></div>
<svg style="left:15.5px;top:871px" width="17" height="17" viewBox="0 0 17 17" fill="#fff"><path d="M0 2.4 L7.4 1.3 V8 H0 Z M8.4 1.2 L17 0 V8 H8.4 Z M0 9 H7.4 V15.7 L0 14.6 Z M8.4 9 H17 V17 L8.4 15.8 Z"/></svg>
<svg style="left:63px;top:870px" width="18" height="19" viewBox="0 0 18 19" fill="none" stroke="#fff" stroke-width="1.4"><circle cx="11.4" cy="6.8" r="5.6"/><path d="M7.4 10.8 L0.8 17.6"/></svg>
<svg style="left:111px;top:872px" width="17" height="16" viewBox="0 0 17 16" fill="none" stroke="#fff" stroke-width="1.2"><rect x="1.6" y="3.6" width="9.8" height="8.8"/><path d="M0.6 0.6 H12.4 M0.6 15.4 H12.4 M15.4 0.4 V3 M15.4 5.6 V10.4 M15.4 13 V15.6"/></svg>
<svg style="left:160px;top:867px" width="23" height="24" viewBox="0 0 23 24"><path d="M11.6 5.4 C6.6 5.4 3.4 9 3.4 13.4 C3.4 18 6.8 21.4 11.6 21.4 C15 21.4 17.8 19.6 19 16.6 H14.4 C13.8 17.6 12.8 18.2 11.6 18.2 C9.6 18.2 8.2 16.8 8 14.6 H19.6 C20.2 9.4 17 5.4 11.6 5.4 Z M8 11.6 C8.4 9.8 9.8 8.6 11.6 8.6 C13.6 8.6 14.8 9.8 15 11.6 Z" fill="#2ea3e6"/><path d="M2.4 20 C-2 14 6 4.6 16 2.2 C20 1.4 22.4 2.6 21 6 C21.2 3.8 18.6 3.4 15.6 4.6 C8.6 7.4 1.6 15 2.4 20 Z" fill="#f6c526"/></svg>
<svg style="left:208px;top:869px" width="23" height="20" viewBox="0 0 23 20"><path d="M0.4 2 H8 L10 4 H22.6 V19.4 H0.4 Z" fill="#f4c84a"/><rect x="0.4" y="5" width="22.2" height="14.4" fill="#fbdc7a"/><rect x="2" y="1.2" width="6" height="1.6" fill="#d9a520"/><path d="M6 19.4 V12 H17 V19.4 H14 V15 H9 V19.4 Z" fill="#2b9be8"/></svg>
<svg style="left:256px;top:867px" width="26" height="26" viewBox="0 0 26 26"><circle cx="13" cy="13" r="11.2" fill="#fff" stroke="#45c2cb" stroke-width="1.8"/><path d="M5.5 9.5 C4.5 12 4.8 15 5.2 17 L6.4 14 C6.6 12 7 10.5 7.6 9.4 Z" fill="#3a2c28"/><path d="M7.6 9 C8.6 7 10.4 5.2 12.6 4.6" fill="none" stroke="#8a8280" stroke-width="0.7"/><ellipse cx="16.6" cy="9" rx="2" ry="1.25" transform="rotate(-15 16.6 9)" fill="#3a2c28"/><circle cx="11.4" cy="8.3" r="0.7" fill="#3a2c28"/><path d="M11 14 C13 16 15.5 16.5 17 15.2 L18.2 14 L18.4 17 C18.2 20 17.6 21.5 16.8 22.6 C14.5 23.6 11.5 23.4 9.2 22 C10.2 19.5 11 17 11 14 Z" fill="#3a2c28"/><path d="M16.4 12.4 l0.8 2.6 l1 -2.8" fill="none" stroke="#3a2c28" stroke-width="0.7"/><rect x="15" y="16.4" width="1.4" height="1.5" fill="#fff"/></svg>
<div class="abs" style="left:294px;top:860px;width:48px;height:40px;background:#343434"></div>
<div class="abs" style="left:294px;top:898px;width:48px;height:2px;background:#76b9ed"></div>
<svg style="left:305px;top:867px" width="26" height="26" viewBox="0 0 26 26"><circle cx="13" cy="13" r="11.2" fill="#fff" stroke="#45c2cb" stroke-width="1.8"/><path d="M5.5 9.5 C4.5 12 4.8 15 5.2 17 L6.4 14 C6.6 12 7 10.5 7.6 9.4 Z" fill="#3a2c28"/><path d="M7.6 9 C8.6 7 10.4 5.2 12.6 4.6" fill="none" stroke="#8a8280" stroke-width="0.7"/><ellipse cx="16.6" cy="9" rx="2" ry="1.25" transform="rotate(-15 16.6 9)" fill="#3a2c28"/><circle cx="11.4" cy="8.3" r="0.7" fill="#3a2c28"/><path d="M11 14 C13 16 15.5 16.5 17 15.2 L18.2 14 L18.4 17 C18.2 20 17.6 21.5 16.8 22.6 C14.5 23.6 11.5 23.4 9.2 22 C10.2 19.5 11 17 11 14 Z" fill="#3a2c28"/><path d="M16.4 12.4 l0.8 2.6 l1 -2.8" fill="none" stroke="#3a2c28" stroke-width="0.7"/><rect x="15" y="16.4" width="1.4" height="1.5" fill="#fff"/></svg>
<!-- tray -->
<svg style="left:1348px;top:876px" width="13" height="8" viewBox="0 0 13 8"><path d="M0.6 7 L6.5 1 L12.4 7" fill="none" stroke="#fff" stroke-width="1.2"/></svg>
<svg style="left:1373px;top:872px" width="14" height="17" viewBox="0 0 14 17" fill="none" stroke="#fff" stroke-width="1"><path d="M2.5 4.5 V0.5 H7.5 V4.5 M0.5 4.5 H9.5 V15.5 H0.5 Z M8 13.4 L9.8 15.2 L13 11.6"/><path d="M4 2 v1 M6 2 v1" stroke-width="0.8"/></svg>
<svg style="left:1394px;top:873px" width="17" height="15" viewBox="0 0 17 15" fill="none" stroke="#fff" stroke-width="1"><path d="M4.5 0.5 H16.5 V10.5 H4.5 M10.5 10.5 V13.5 M7 13.8 H14 M0.5 1.5 H4.5 V5.5 H0.5 Z M2.5 5.5 V10.5 H4.5 M1.6 2.6 l0.9 1 l0.9 -1"/></svg>
<svg style="left:1418px;top:873px" width="17" height="15" viewBox="0 0 17 15" fill="none" stroke="#fff" stroke-width="1"><path d="M0.6 5 H3.4 L7 1.4 V13.6 L3.4 10 H0.6 Z"/><path d="M9.4 5 c1.2 1.4 1.2 3.6 0 5 M11.6 3.2 c2 2.4 2 6.2 0 8.6 M13.8 1.4 c3 3.6 3 8.6 0 12.2"/></svg>
<span class="t" style="letter-spacing:-0.565px;left:1443.6px;top:872.2px;color:#fff;font-size:12.5px">ENG</span>
<span class="t" style="letter-spacing:-0.056px;left:1495px;top:862.6px;color:#fff;font-size:12.5px">20:38</span>
<span class="t" style="letter-spacing:0.344px;left:1476.6px;top:881.6px;color:#fff;font-size:12.5px">2025/10/21</span>
<svg style="left:1559px;top:872px" width="16" height="17" viewBox="0 0 16 17"><path d="M0.4 0.4 H15.6 V12 H6 L2.6 15.6 V12 H0.4 Z" fill="#fff"/><path d="M3 3.4 H13 M3 6 H13 M3 8.6 H13" stroke="#000" stroke-width="1"/></svg>

<svg style="left:1566px;top:879px" width="17" height="17" viewBox="0 0 17 17"><circle cx="8.5" cy="8.5" r="8" fill="#3c3c3c" stroke="#000" stroke-width="1"/></svg>
<span class="t" style="left:1570.6px;top:878.6px;color:#fff;font-size:11.5px;font-weight:bold">1</span>
<div class="vl" style="left:1595px;top:860px;height:40px;background:#5a5a5a"></div>

<div class="abs" id="wm" style="left:0;top:0;width:1600px;height:860px;overflow:hidden;pointer-events:none">
<div class="wm" style="left:7.8px;top:-165.8px"><span class="w1">audit审计01(Audit1)</span><br><span class="w2">audit-172.18.210.237</span></div>
<div class="wm" style="left:307.9px;top:-165.8px"><span class="w1">audit审计01(Audit1)</span><br><span class="w2">audit-172.18.210.237</span></div>
<div class="wm" style="left:607.9px;top:-165.8px"><span class="w1">audit审计01(Audit1)</span><br><span class="w2">audit-172.18.210.237</span></div>
<div class="wm" style="left:907.8px;top:-165.8px"><span class="w1">audit审计01(Audit1)</span><br><span class="w2">audit-172.18.210.237</span></div>
<div class="wm" style="left:1207.8px;top:-165.8px"><span class="w1">audit审计01(Audit1)</span><br><span class="w2">audit-172.18.210.237</span></div>
<div class="wm" style="left:1507.8px;top:-165.8px"><span class="w1">audit审计01(Audit1)</span><br><span class="w2">audit-172.18.210.237</span></div>
<div class="wm" style="left:7.8px;top:134.2px"><span class="w1">audit审计01(Audit1)</span><br><span class="w2">audit-172.18.210.237</span></div>
<div class="wm" style="left:307.9px;top:134.2px"><span class="w1">audit审计01(Audit1)</span><br><span class="w2">audit-172.18.210.237</span></div>
<div class="wm" style="left:607.9px;top:134.2px"><span class="w1">audit审计01(Audit1)</span><br><span class="w2">audit-172.18.210.237</span></div>
<div class="wm" style="left:907.8px;top:134.2px"><span class="w1">audit审计01(Audit1)</span><br><span class="w2">audit-172.18.210.237</span></div>
<div class="wm" style="left:1207.8px;top:134.2px"><span class="w1">audit审计01(Audit1)</span><br><span class="w2">audit-172.18.210.237</span></div>
<div class="wm" style="left:1507.8px;top:134.2px"><span class="w1">audit审计01(Audit1)</span><br><span class="w2">audit-172.18.210.237</span></div>
<div class="wm" style="left:7.8px;top:434.2px"><span class="w1">audit审计01(Audit1)</span><br><span class="w2">audit-172.18.210.237</span></div>
<div class="wm" style="left:307.9px;top:434.2px"><span class="w1">audit审计01(Audit1)</span><br><span class="w2">audit-172.18.210.237</span></div>
<div class="wm" style="left:607.9px;top:434.2px"><span class="w1">audit审计01(Audit1)</span><br><span class="w2">audit-172.18.210.237</span></div>
<div class="wm" style="left:907.8px;top:434.2px"><span class="w1">audit审计01(Audit1)</span><br><span class="w2">audit-172.18.210.237</span></div>
<div class="wm" style="left:1207.8px;top:434.2px"><span class="w1">audit审计01(Audit1)</span><br><span class="w2">audit-172.18.210.237</span></div>
<div class="wm" style="left:1507.8px;top:434.2px"><span class="w1">audit审计01(Audit1)</span><br><span class="w2">audit-172.18.210.237</span></div>
<div class="wm" style="left:7.8px;top:734.2px"><span class="w1">audit审计01(Audit1)</span><br><span class="w2">audit-172.18.210.237</span></div>
<div class="wm" style="left:307.9px;top:734.2px"><span class="w1">audit审计01(Audit1)</span><br><span class="w2">audit-172.18.210.237</span></div>
<div class="wm" style="left:607.9px;top:734.2px"><span class="w1">audit审计01(Audit1)</span><br><span class="w2">audit-172.18.210.237</span></div>
<div class="wm" style="left:907.8px;top:734.2px"><span class="w1">audit审计01(Audit1)</span><br><span class="w2">audit-172.18.210.237</span></div>
<div class="wm" style="left:1207.8px;top:734.2px"><span class="w1">audit审计01(Audit1)</span><br><span class="w2">audit-172.18.210.237</span></div>
<div class="wm" style="left:1507.8px;top:734.2px"><span class="w1">audit审计01(Audit1)</span><br><span class="w2">audit-172.18.210.237</span></div>
</div>
</body>
</html>
